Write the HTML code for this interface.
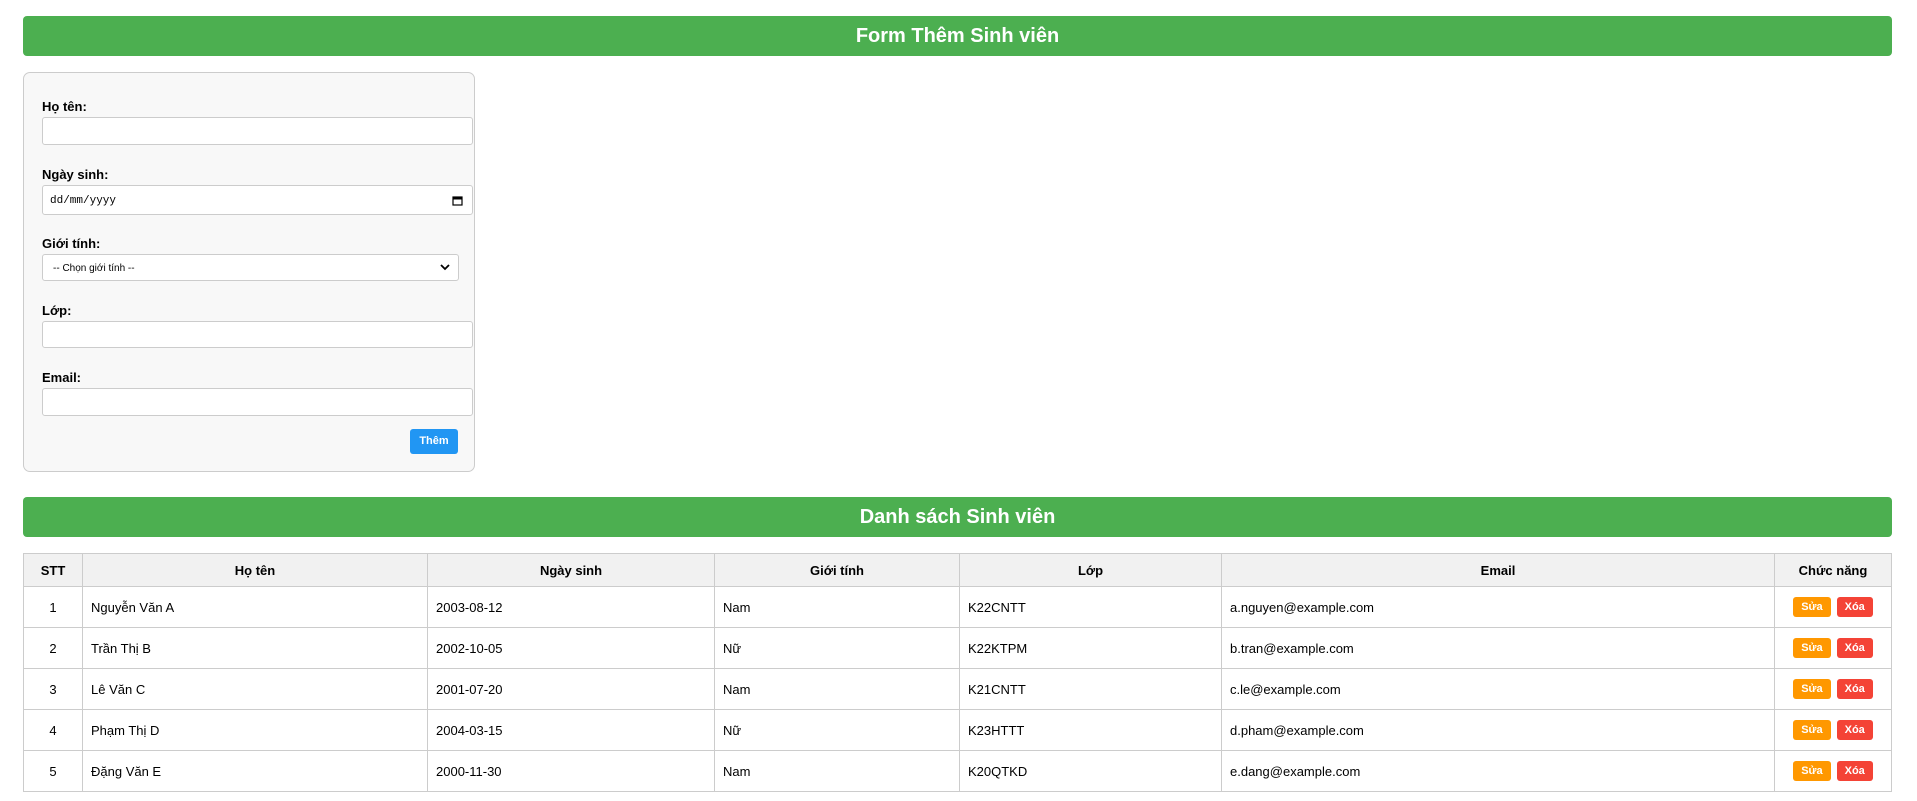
<!DOCTYPE html>
<html><head><meta charset="utf-8"><style>
*{box-sizing:border-box}
body{margin:0;width:1917px;height:801px;background:#fff;font-family:"Liberation Sans",Arial,sans-serif;font-size:13px;color:#000;position:relative;overflow:hidden}
.bar{position:absolute;left:23px;width:1869px;height:40px;background:#4CAF50;color:#fff;border-radius:4px;font-weight:bold;font-size:20px;text-align:center;line-height:40px}
.form{position:absolute;left:23px;top:72px;width:452px;height:400px;background:#f8f8f8;border:1px solid #ccc;border-radius:7px}
.lbl{position:absolute;left:18px;font-weight:bold;font-size:13px}
.inp{position:absolute;left:18px;width:431px;height:28px;background:#fff;border:1px solid #ccc;border-radius:3px}
.btn{position:absolute;color:#fff;font-weight:bold;font-size:11px;text-align:center;border-radius:3px}
table{position:absolute;left:23px;top:553px;width:1869px;border-collapse:collapse}
td,th{border:1px solid #ccc;padding:0 8px;font-size:13px}
th{background:#f1f1f1;height:33px;text-align:center}
td{height:41px}
td.c{text-align:center}
.s,.x{display:inline-flex;align-items:center;justify-content:center;vertical-align:middle;color:#fff;font-size:11px;font-weight:bold;height:20px;border-radius:3px;padding:0 8px}
.s{background:#FF9800;margin-right:6px}.x{background:#F44336}
</style></head><body>
<div class="bar" style="top:16px">Form Thêm Sinh viên</div>
<div class="form">
<div class="lbl" style="top:26px">Họ tên:</div>
<div class="inp" style="top:44px"></div>
<div class="lbl" style="top:94px">Ngày sinh:</div>
<div class="inp" style="top:112px;height:30px;font-family:'Liberation Mono',monospace;font-size:11px;padding:9px 0 0 7px">dd/mm/yyyy<svg style="position:absolute;right:9px;top:9px" width="11" height="11" viewBox="0 0 11 11"><rect x="1" y="2" width="9" height="8" fill="none" stroke="#000" stroke-width="1.2"/><rect x="1" y="2" width="9" height="2.5" fill="#000"/></svg></div>
<div class="lbl" style="top:163px">Giới tính:</div>
<div class="inp" style="top:181px;width:417px;height:27px;font-size:10px;padding:8px 0 0 10px">-- Chọn giới tính --<svg style="position:absolute;right:8px;top:9px" width="10" height="7" viewBox="0 0 10 7"><path d="M1 1l4 4 4-4" fill="none" stroke="#000" stroke-width="1.8"/></svg></div>
<div class="lbl" style="top:230px">Lớp:</div>
<div class="inp" style="top:248px;height:27px"></div>
<div class="lbl" style="top:297px">Email:</div>
<div class="inp" style="top:315px;height:28px"></div>
<div class="btn" style="left:386px;top:356px;width:48px;height:25px;line-height:25px;background:#2196F3">Thêm</div>
</div>
<div class="bar" style="top:497px">Danh sách Sinh viên</div>
<table>
<tr><th style="width:59px">STT</th><th style="width:345px">Họ tên</th><th style="width:287px">Ngày sinh</th><th style="width:245px">Giới tính</th><th style="width:262px">Lớp</th><th style="width:553px">Email</th><th>Chức năng</th></tr>
<tr><td class="c">1</td><td>Nguyễn Văn A</td><td>2003-08-12</td><td>Nam</td><td>K22CNTT</td><td>a.nguyen@example.com</td><td class="c"><span class="s">Sửa</span><span class="x">Xóa</span></td></tr>
<tr><td class="c">2</td><td>Trần Thị B</td><td>2002-10-05</td><td>Nữ</td><td>K22KTPM</td><td>b.tran@example.com</td><td class="c"><span class="s">Sửa</span><span class="x">Xóa</span></td></tr>
<tr><td class="c">3</td><td>Lê Văn C</td><td>2001-07-20</td><td>Nam</td><td>K21CNTT</td><td>c.le@example.com</td><td class="c"><span class="s">Sửa</span><span class="x">Xóa</span></td></tr>
<tr><td class="c">4</td><td>Phạm Thị D</td><td>2004-03-15</td><td>Nữ</td><td>K23HTTT</td><td>d.pham@example.com</td><td class="c"><span class="s">Sửa</span><span class="x">Xóa</span></td></tr>
<tr><td class="c">5</td><td>Đặng Văn E</td><td>2000-11-30</td><td>Nam</td><td>K20QTKD</td><td>e.dang@example.com</td><td class="c"><span class="s">Sửa</span><span class="x">Xóa</span></td></tr>
</table>
</body></html>
